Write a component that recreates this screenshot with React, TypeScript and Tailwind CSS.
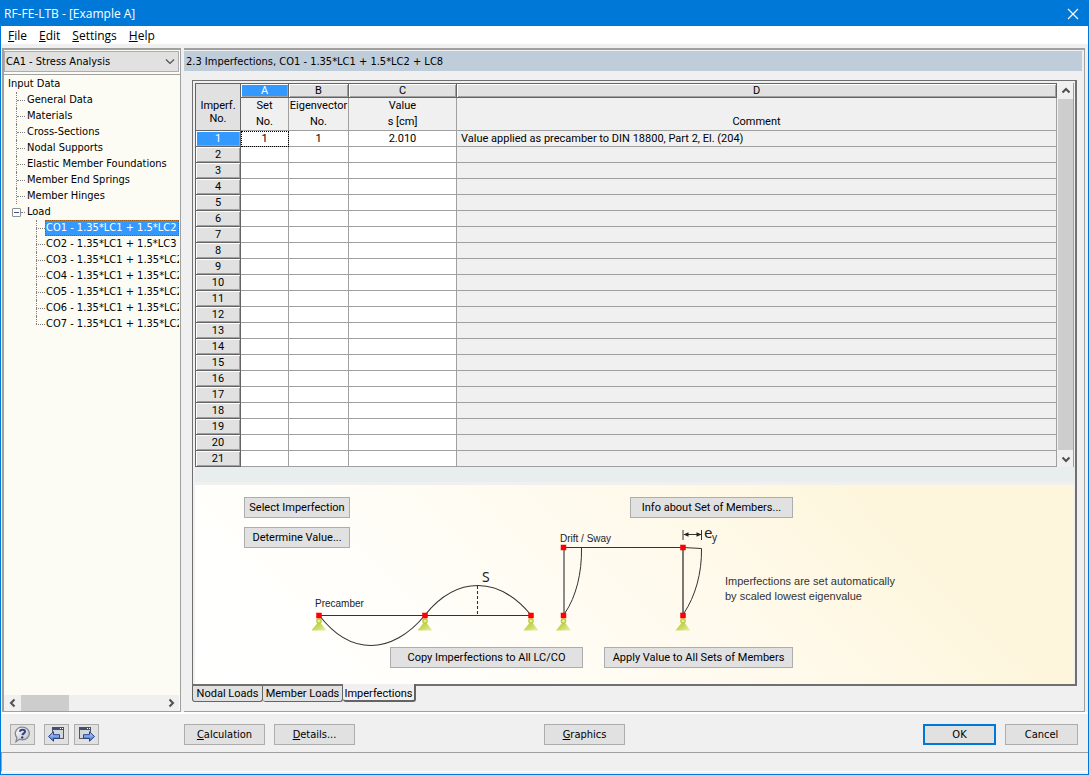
import type { ReactNode } from "react";

const treeItems = [
  "General Data",
  "Materials",
  "Cross-Sections",
  "Nodal Supports",
  "Elastic Member Foundations",
  "Member End Springs",
  "Member Hinges",
];

const loadItems = [
  "CO1 - 1.35*LC1 + 1.5*LC2",
  "CO2 - 1.35*LC1 + 1.5*LC3",
  "CO3 - 1.35*LC1 + 1.35*LC2",
  "CO4 - 1.35*LC1 + 1.35*LC2",
  "CO5 - 1.35*LC1 + 1.35*LC2",
  "CO6 - 1.35*LC1 + 1.35*LC2",
  "CO7 - 1.35*LC1 + 1.35*LC2",
];

const rows = Array.from({ length: 21 }, (_, i) => i + 1);

function Chevron({ dir }: { dir: "up" | "down" | "left" | "right" }) {
  const d = {
    up: "M1.5 6.5 5 3l3.5 3.5",
    down: "M1.5 3.5 5 7l3.5-3.5",
    left: "M6.5 1.5 3 5l3.5 3.5",
    right: "M3.5 1.5 7 5 3.5 8.5",
  }[dir];
  return (
    <svg width="10" height="10" viewBox="0 0 10 10" fill="none" stroke="#505050" strokeWidth="2" aria-hidden="true">
      <path d={d} />
    </svg>
  );
}

function PushButton({
  children,
  className = "",
  label,
}: {
  children: ReactNode;
  className?: string;
  label?: string;
}) {
  return (
    <button
      type="button"
      aria-label={label}
      className={
        "flex h-[21px] shrink-0 items-center justify-center border border-[#adadad] bg-[#e1e1e1] whitespace-nowrap " +
        (label ? "" : "pt-0.5 ") +
        className
      }
    >
      {children}
    </button>
  );
}

function Support({ x }: { x: number }) {
  return (
    <g>
      <path d={`M${x} 621 L${x + 7.5} 630.5 H${x - 7.5} Z`} fill="url(#support)" />
      <circle cx={x} cy="621" r="2.2" fill="#e4ee9a" stroke="#b4cc2a" strokeWidth="1.2" />
    </g>
  );
}

function Node({ x, y }: { x: number; y: number }) {
  return <rect x={x - 2.5} y={y - 2.5} width="5" height="5" fill="#fe0000" stroke="#fe0000" strokeWidth="0.5" />;
}

function SupportGradient() {
  return (
    <defs>
      <linearGradient id="support" x1="0" y1="0" x2="1" y2="1">
        <stop offset="0" stopColor="#b5cb30" />
        <stop offset="0.5" stopColor="#c6d856" />
        <stop offset="1" stopColor="#e9f0b4" />
      </linearGradient>
    </defs>
  );
}

function PrecamberDrawing() {
  return (
    <svg className="mt-[17px] ml-[68px] block" width="232" height="82" viewBox="312 565 232 82" aria-label="Precamber">
      <SupportGradient />
      <text x="315" y="607" fontSize="10" fill="#222" className="font-['Liberation_Sans',sans-serif]">
        Precamber
      </text>
      <text x="482" y="582" fontSize="14" fill="#222" className="font-['Noto_Sans',sans-serif]">
        S
      </text>
      <g fill="none" stroke="#333" strokeWidth="1.1">
        <path d="M319 615.5H531" />
        <path d="M319 615C335 636 353 645.5 371 645.5S409 635 425 615C441 595 459 585.5 478 585.5S515 596 531 615" />
        <path d="M477.500 586V615" strokeDasharray="3 2" />
      </g>
      <Support x={319} />
      <Support x={425} />
      <Support x={531} />
      <Node x={319} y={615.5} />
      <Node x={425} y={615.5} />
      <Node x={531} y={615.5} />
    </svg>
  );
}

function SwayDrawing() {
  return (
    <svg className="block shrink-0" width="165" height="108" viewBox="555 525 165 108" aria-label="Drift / Sway">
      <SupportGradient />
      <text x="560" y="542" fontSize="10" fill="#222" className="font-['Liberation_Sans',sans-serif]">
        Drift / Sway
      </text>
      <text x="704" y="538" fontSize="15" fill="#222" className="font-['Noto_Sans',sans-serif]">
        e
      </text>
      <text x="712" y="541" fontSize="10" fill="#222" className="font-['Noto_Sans',sans-serif]">
        y
      </text>
      <g fill="none" stroke="#333">
        <path d="M564 547.500H683L701.500 548.500" />
        <path d="M564 548V615" stroke="#8c8c88" strokeWidth="2" />
        <path d="M683 548V615" strokeWidth="1.300" />
        <path d="M581.500 548C582 573 576 597 565 613M701.500 548.500C702 573 695 597 684 613" />
        <path d="M683 530V540M701.500 530V540M684 534.500H701" />
      </g>
      <path d="M683.500 534.500l5-2.200v4.400zM701.500 534.500l-5-2.200v4.400z" fill="#222" />
      <Support x={563.5} />
      <Support x={683} />
      <Node x={563.5} y={547.5} />
      <Node x={683} y={547.5} />
      <Node x={563.5} y={615.5} />
      <Node x={683} y={615.5} />
    </svg>
  );
}

function HelpIcon() {
  return (
    <svg width="17" height="17" viewBox="0 0 17 17" aria-hidden="true">
      <defs>
        <linearGradient id="bubble" x1="0" y1="0" x2="1" y2="1">
          <stop offset="0" stopColor="#ffffff" />
          <stop offset="1" stopColor="#b9bcc4" />
        </linearGradient>
      </defs>
      <path d="M8.500 1.200a6.800 6.300 0 0 1 0 12.600c-1 0-2-.2-3-.6L2 15.500l.9-4A6.800 6.300 0 0 1 8.500 1.200Z" fill="url(#bubble)" stroke="#85888f" strokeWidth="1.300" />
      <path d="M6 5.800C6 3 11.200 2.900 11 5.600 10.900 7.300 8.600 7.400 8.400 9.200" fill="none" stroke="#2e4482" strokeWidth="2" />
      <circle cx="8.200" cy="11.500" r="1.200" fill="#2e4482" />
    </svg>
  );
}

function PanelArrowIcon({ forward }: { forward?: boolean }) {
  return (
    <svg width="17" height="17" viewBox="0 0 17 17" aria-hidden="true">
      <defs>
        <linearGradient id="arrowFill" x1="0" y1="0" x2="0" y2="1">
          <stop offset="0" stopColor="#c4dcff" />
          <stop offset="1" stopColor="#3f6fd0" />
        </linearGradient>
      </defs>
      <g>
        <rect x={forward ? 1.5 : 4.5} y="1.500" width="11" height="11" fill="#d3d6da" stroke="#55585f" />
        <rect x={forward ? 1 : 4} y="1" width="12" height="3" fill="#44506e" />
        <rect x={forward ? 9 : 12} y="2" width="1" height="1" fill="#fff" />
        <rect x={forward ? 11 : 14} y="2" width="1" height="1" fill="#fff" />
      </g>
      <path
        d={
          forward
            ? "M16.500 10.500 11.500 5.800v2.900h-6v3.600h6v2.900z"
            : "M.5 10.500 5.500 5.800v2.900h6v3.600h-6v2.900z"
        }
        fill="url(#arrowFill)"
        stroke="#24408c"
      />
    </svg>
  );
}

function Sidebar() {
  return (
    <aside className="flex w-[179px] shrink-0 flex-col overflow-hidden border-t-2 border-r border-b border-l-2 border-[#a0a0a0] bg-[#fcfcf4]">
      <div className="relative mt-px mr-px flex">
        <select
          aria-label="Case"
          className="h-[21px] w-full appearance-none border border-[#adadad] bg-[#e1e1e1] pt-0.5 pl-px"
        >
          <option>CA1 - Stress Analysis</option>
        </select>
        <svg className="pointer-events-none absolute top-1.5 right-1" width="10" height="9" viewBox="0 0 10 9" fill="none" stroke="#505050" aria-hidden="true">
          <path d="M1 2.500 5 6.500 9 2.500" strokeWidth="1.200" />
        </svg>
      </div>
      <div className="mt-0.5 h-px shrink-0 bg-[#a0a0a0]" />
      <nav aria-label="Input Data" className="mt-px mr-px flex-1 overflow-hidden">
        <div className="h-4 pl-1 leading-4">Input Data</div>
        <ul className="ml-3 leading-4">
          {treeItems.map((item) => (
            <li key={item} className="flex h-4 items-center border-l border-dotted border-[#808080]">
              <span className="mr-0.5 w-2 border-t border-dotted border-[#808080]" />
              <button type="button" className="whitespace-nowrap">{item}</button>
            </li>
          ))}
        </ul>
        <div className="flex h-4 items-center pl-2 leading-4">
          <button type="button" aria-label="Collapse Load" className="flex size-[9px] items-center justify-center rounded-[1px] border border-[#919191] bg-white">
            <span className="h-px w-[5px] bg-[#3a4f9a]" />
          </button>
          <span className="mr-0.5 w-1 border-t border-dotted border-[#808080]" />
          <button type="button">Load</button>
        </div>
        <ul className="ml-8 leading-4">
          {loadItems.map((item, i) => (
            <li key={item} className="relative flex h-4 items-center">
              <span
                className={
                  "absolute top-0 left-0 border-l border-dotted border-[#808080] " +
                  (i === loadItems.length - 1 ? "h-2" : "h-4")
                }
              />
              <span className="w-[9px] shrink-0 border-t border-dotted border-[#808080]" />
              <button
                type="button"
                className={
                  "h-4 min-w-0 flex-1 overflow-hidden pl-px text-left whitespace-nowrap " +
                  (i === 0
                    ? "bg-[#3399ff] text-white outline-1 -outline-offset-1 outline-dotted outline-[#a05a10]"
                    : "")
                }
              >
                {item}
              </button>
            </li>
          ))}
        </ul>
      </nav>
      <div className="mr-px flex h-4 shrink-0 items-center bg-[#f0f0f0]">
        <button type="button" aria-label="Scroll left" className="flex w-[17px] justify-center">
          <Chevron dir="left" />
        </button>
        <div className="flex h-4 flex-1">
          <div className="h-full w-12 bg-[#cdcdcd]" />
        </div>
        <button type="button" aria-label="Scroll right" className="flex w-[17px] justify-center">
          <Chevron dir="right" />
        </button>
      </div>
    </aside>
  );
}

const bevel = "shadow-[inset_1px_1px_0_#ffffff,inset_-1px_-1px_0_#a0a0a0]";

function ImperfectionTable() {
  const letters = ["A", "B", "C", "D"];
  const titles = [
    ["Set", "No."],
    ["Eigenvector", "No."],
    ["Value", "s [cm]"],
    ["\u00a0", "Comment"],
  ];
  const values = ["1", "1", "2.010"];
  return (
    <table className="w-full table-fixed border-separate border-spacing-0 border-t border-l border-[#646464] text-center">
      <colgroup>
        <col className="w-[45px]" />
        <col className="w-12" />
        <col className="w-[60px]" />
        <col className="w-[108px]" />
        <col />
      </colgroup>
      <thead>
        <tr className="h-[14px]">
          <th rowSpan={2} scope="col" className="border-r border-b border-[#646464] bg-[#e1e1e1] pt-2.5 leading-[13px] font-normal">
            Imperf.
            <br />
            No.
          </th>
          {letters.map((l) => (
            <th
              key={l}
              scope="col"
              className={
                "h-[14px] border-r border-b border-[#646464] p-0 leading-[13px] font-normal " +
                bevel +
                (l === "A" ? " bg-[#3399ff] text-white" : " bg-[#e1e1e1]")
              }
            >
              {l}
            </th>
          ))}
        </tr>
        <tr className="h-[33px]">
          {titles.map(([a, b]) => (
            <th key={a + b} scope="col" className="h-[33px] border-r border-b border-[#a0a0a0] bg-[#f0f0f0] p-0 leading-4 font-normal whitespace-nowrap">
              {a}
              <br />
              {b}
            </th>
          ))}
        </tr>
      </thead>
      <tbody>
        {rows.map((n) => (
          <tr key={n} className="h-4">
            <th
              scope="row"
              className={
                "h-4 border-r border-b border-[#646464] p-0 leading-[15px] font-normal " +
                bevel +
                (n === 1 ? " bg-[#3399ff] text-white" : " bg-[#e1e1e1]")
              }
            >
              {n}
            </th>
            {values.map((v, i) => (
              <td
                key={i}
                className={
                  "border-r border-b border-[#a0a0a0] bg-white p-0 leading-[15px]" +
                  (n === 1 && i === 0 ? " outline-1 outline-dotted outline-black -outline-offset-1" : "")
                }
              >
                {n === 1 ? v : ""}
              </td>
            ))}
            <td className="border-r border-b border-[#a0a0a0] bg-[#f0f0f0] p-0 pl-1 text-left leading-[15px]">
              {n === 1 ? "Value applied as precamber to DIN 18800, Part 2, El. (204)" : ""}
            </td>
          </tr>
        ))}
      </tbody>
    </table>
  );
}

export default function App() {
  return (
    <div className="flex min-h-screen flex-col border border-[#0078d7] bg-[#f0f0f0] font-['DejaVu_Sans_Condensed','DejaVu_Sans',sans-serif] text-[11px] text-black">
      <header className="flex h-[25px] items-center justify-between bg-[#0078d7] pr-[7px] pl-[3px] font-['Open_Sans',sans-serif] text-xs text-white">
        <h1>RF-FE-LTB - [Example A]</h1>
        <button type="button" aria-label="Close" className="flex size-4 items-center justify-center">
          <svg width="12" height="12" viewBox="0 0 12 12" stroke="#fff" strokeWidth="1.200" aria-hidden="true">
            <path d="M1 1l10 10M11 1 1 11" />
          </svg>
        </button>
      </header>
      <nav className="flex h-[18px] items-center gap-3 bg-white pt-0.5 pl-[7px] font-['Open_Sans',sans-serif] text-xs">
        <button type="button"><u>F</u>ile</button>
        <button type="button"><u>E</u>dit</button>
        <button type="button"><u>S</u>ettings</button>
        <button type="button"><u>H</u>elp</button>
      </nav>

      <div className="mt-1 flex flex-1 gap-[3px] pr-[3px] pl-px">
        <Sidebar />
        <main className="flex min-w-0 flex-1 flex-col border-t-2 border-r border-b border-[#a0a0a0]">
          <h2 className="mt-px mr-0.5 h-5 bg-[#bfccda] pl-0.5 leading-[22px]">
            2.3 Imperfections, CO1 - 1.35*LC1 + 1.5*LC2 + LC8
          </h2>
          <div className="mt-[9px] mr-[7px] mb-[9px] ml-2 flex flex-1 flex-col font-['Roboto',sans-serif]">
            <div className="flex flex-1 flex-col border-t border-r-2 border-b-2 border-l border-[#707070]">
              <div className="flex pt-0.5 pr-px pl-0.5">
                <div className="min-w-0 flex-1">
                  <ImperfectionTable />
                </div>
                <div className="ml-px flex w-4 shrink-0 flex-col border-r border-[#a0a0a0] bg-[#cdcdcd]">
                  <button type="button" aria-label="Scroll up" className="flex h-4 items-center justify-center bg-[#f0f0f0]">
                    <Chevron dir="up" />
                  </button>
                  <div className="flex-1" />
                  <button type="button" aria-label="Scroll down" className="flex h-[17px] items-center justify-center bg-[#f0f0f0]">
                    <Chevron dir="down" />
                  </button>
                </div>
              </div>
              <div className="ml-0.5 h-[15px] bg-[#e8eeee]" />
              <section className="mr-px ml-0.5 mt-[3px] flex-1 bg-[linear-gradient(45deg,#ffffff_0%,#fffefa_25%,#fff9ea_60%,#fdf6dc_80%,#fdf5dc_100%)] pt-3 pb-4">
                <div className="flex">
                  <div className="w-[360px] shrink-0 pl-[49px]">
                    <PushButton className="w-[106px]">Select Imperfection</PushButton>
                    <PushButton className="mt-[9px] w-[106px]">Determine Value...</PushButton>
                    <PrecamberDrawing />
                  </div>
                  <div>
                    <PushButton className="ml-[75px] w-[163px]">Info about Set of Members...</PushButton>
                    <div className="mt-[7px] flex">
                      <SwayDrawing />
                      <p className="mt-[49px] ml-[5px] font-['Liberation_Sans',sans-serif] leading-[15px] whitespace-nowrap text-[#333]">
                        Imperfections are set automatically
                        <br />
                        by scaled lowest eigenvalue
                      </p>
                    </div>
                  </div>
                </div>
                <div className="flex gap-[21px] pl-[195px]">
                  <PushButton className="w-[193px]">Copy Imperfections to All LC/CO</PushButton>
                  <PushButton className="w-[189px]">Apply Value to All Sets of Members</PushButton>
                </div>
              </section>
            </div>
            <div role="tablist" className="flex h-4 items-start">
              <button type="button" role="tab" className="h-4 w-[71px] rounded-b-[3px] border-r border-b border-l border-[#646464] bg-[#e1e1e1] leading-4 whitespace-nowrap">
                Nodal Loads
              </button>
              <button type="button" role="tab" className="h-4 w-20 rounded-b-[3px] border-r border-b border-[#646464] bg-[#e1e1e1] leading-4 whitespace-nowrap">
                Member Loads
              </button>
              <button type="button" role="tab" aria-selected="true" className="relative -top-0.5 h-[18px] w-[73px] rounded-b-[3px] border-r-2 border-b-2 border-[#646464] bg-[#f0f0f0] pt-0.5 leading-4 whitespace-nowrap">
                Imperfections
              </button>
            </div>
          </div>
        </main>
      </div>

      <footer>
        <div className="flex h-[40px] items-center border-t-2 border-white pt-0.5 pr-2.5 pl-[9px]">
          <PushButton label="Help" className="w-[25px]"><HelpIcon /></PushButton>
          <PushButton label="Previous" className="ml-[9px] w-[25px]"><PanelArrowIcon /></PushButton>
          <PushButton label="Next" className="ml-[5px] w-[25px]"><PanelArrowIcon forward /></PushButton>
          <PushButton className="ml-[85px] w-[81px]"><span><u>C</u>alculation</span></PushButton>
          <PushButton className="ml-[9px] w-[81px]"><span><u>D</u>etails...</span></PushButton>
          <PushButton className="ml-[189px] w-[81px]"><span><u>G</u>raphics</span></PushButton>
          <div className="ml-auto flex gap-[9px]">
            <PushButton className="w-[73px] outline-2 -outline-offset-2 outline-[#0078d7]">OK</PushButton>
            <PushButton className="w-[73px]">Cancel</PushButton>
          </div>
        </div>
        <div className="mb-0.5 h-5 border-t border-b border-l border-t-[#a0a0a0] border-b-white border-l-[#a0a0a0]" />
      </footer>
    </div>
  );
}
